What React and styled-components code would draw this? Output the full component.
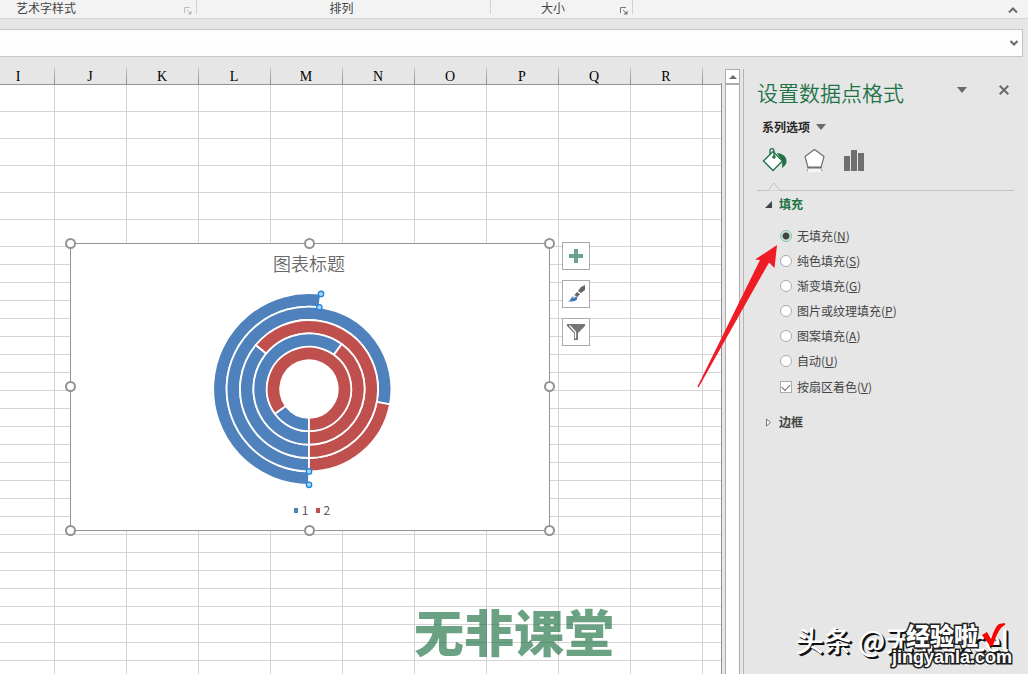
import React, { Component } from 'react';
import styled, { createGlobalStyle } from 'styled-components'


const COLUMNS = ['I', 'J', 'K', 'L', 'M', 'N', 'O', 'P', 'Q', 'R', 'S']
const TALL_ROWS = 6
const ROWS = 60

const BLUE = '#4f81bd'
const RED = '#c0504d'

const FILL_OPTIONS = [
  { id: 'none', name: '无填充', hotkey: 'N' },
  { id: 'solid', name: '纯色填充', hotkey: 'S' },
  { id: 'gradient', name: '渐变填充', hotkey: 'G' },
  { id: 'picture', name: '图片或纹理填充', hotkey: 'P' },
  { id: 'pattern', name: '图案填充', hotkey: 'A' },
  { id: 'auto', name: '自动', hotkey: 'U' },
]

// from the outer ring to the inner one, first is the share of series 1
const RINGS = [
  { first: 0.52, restHidden: true },
  { first: 0.78 },
  { first: 0.36 },
  { first: 0.6 },
  { first: 0.15 },
]
const CENTER = 100
const OUTER = 95.8
const STEP = 13.4

function point(radius, share) {
  // the first slice starts at six o'clock
  const angle = Math.PI + share * 2 * Math.PI
  return [CENTER + radius * Math.sin(angle), CENTER - radius * Math.cos(angle)]
}

function slice(outer, inner, from, to) {
  const large = to - from > 0.5 ? 1 : 0
  const a = point(outer, from)
  const b = point(outer, to)
  const c = point(inner, to)
  const d = point(inner, from)
  return `M${a} A${outer} ${outer} 0 ${large} 1 ${b} L${c} A${inner} ${inner} 0 ${large} 0 ${d} Z`
}

const Doughnut = () => (
  <DoughnutSvg viewBox="0 0 200 200" role="img" aria-label="图表标题">
    {RINGS.map((ring, i) => {
      const outer = OUTER - i * STEP
      const inner = outer - STEP
      return (
        <g key={i} stroke="#fff" strokeWidth="1.8">
          <path d={slice(outer, inner, 0, ring.first)} fill={BLUE} />
          {!ring.restHidden && <path d={slice(outer, inner, ring.first, 1)} fill={RED} />}
        </g>
      )
    })}
    {[[OUTER, 0], [OUTER - STEP, 0], [OUTER, 0.52], [OUTER - STEP, 0.52]].map(([r, s]) => {
      const [x, y] = point(r, s)
      return <circle key={`${r}-${s}`} cx={x} cy={y} r="2.7" fill="#a9d1f5" stroke="#1c86dc" strokeWidth="1.3" />
    })}
  </DoughnutSvg>
)

const Launcher = ({ color }) => (
  <svg width="8" height="8" viewBox="0 0 8 8" fill="none" stroke={color}>
    <path d="M0.5 6V0.5H6M3 3l3 3" />
    <path d="M7.5 3.5v4h-4z" fill={color} stroke="none" />
  </svg>
)

const Triangle = () => (
  <svg width="10" height="6" viewBox="0 0 10 6"><path d="M0 0h10L5 6z" fill="#6a6a6a" /></svg>
)

const BucketIcon = () => (
  <svg width="26" height="24" viewBox="0 0 26 24" fill="none">
    <path d="M15 5c6 .5 10 4 9.500 9-.2 2-1.500 4-4.500 6 .3-3 .5-5-.5-8z" fill="#217346" />
    <path d="M11 3.500l9.500 9.500-9.500 9.500L1.500 13z" fill="#fff" stroke="#217346" strokeWidth="1.400" />
    <path d="M8 6.500V2.500c0-2.500 4-2.500 4 0v6" stroke="#217346" strokeWidth="1.300" />
    <circle cx="12" cy="9" r="1.800" fill="#217346" />
  </svg>
)

const PentagonIcon = () => (
  <svg width="24" height="24" viewBox="0 0 24 24" fill="none">
    <path d="M4 20h15v4H4z" fill="#f6f6f6" />
    <path d="M11.500 1.500l9.500 7L18 19.500H5L2 8.500z" fill="#fff" stroke="#6f6f6f" strokeWidth="1.200" />
    <path d="M4.500 19.500h14" stroke="#6f6f6f" strokeWidth="2" />
    <path d="M5 20.500l-1 3M18 20.500l1 3" stroke="#999" />
  </svg>
)

const BarsIcon = () => (
  <svg width="24" height="24" viewBox="0 0 24 24" fill="#6f6f6f">
    <path d="M2 8h6v15H2zM9 2h6v21H9zM16 5h6v18h-6z" />
  </svg>
)

const PlusIcon = () => (
  <svg width="20" height="20" viewBox="0 0 20 20"><path d="M8 3h4v5h5v4h-5v5H8v-5H3V8h5z" fill="#68a490" /></svg>
)

const BrushIcon = () => (
  <svg width="20" height="20" viewBox="0 0 20 20">
    <path d="M19 1v5l-4 3-3-2 3-4z" fill="#666" />
    <path d="M11 8l3 2-2.500 3-3-2z" fill="#666" />
    <path d="M1 17.500c2 0 3-1 4-3 1-2.500 4-3.500 5.500-2s.5 4-2 4.500c-2.500.7-5 .6-7.500.5z" fill="#3e75b5" />
    <path d="M7 14c.5-1.500 2-1.800 2.800-1" stroke="#fff" strokeWidth="1.200" fill="none" />
  </svg>
)

const FunnelIcon = () => (
  <svg width="20" height="20" viewBox="0 0 20 20">
    <path d="M1 2h18v2l-7 7v7H8v-7L1 4z" fill="#757575" />
    <path d="M3.500 3.500l6 6.500v6.500" stroke="#fff" strokeWidth="1.300" fill="none" />
  </svg>
)

class Ribbon extends Component {
  render() {
    return (
      <RibbonStyle>
        <Group width={197}>
          <GroupName indent={16}>艺术字样式</GroupName>
          <LauncherButton type="button" aria-label="艺术字样式"><Launcher color="#bdbdbd" /></LauncherButton>
        </Group>
        <Group width={294}>
          <GroupName centered>排列</GroupName>
        </Group>
        <Group width={142}>
          <GroupName indent={50}>大小</GroupName>
          <LauncherButton type="button" aria-label="大小"><Launcher color="#777" /></LauncherButton>
        </Group>
        <Collapse type="button" aria-label="折叠功能区">
          <svg width="10" height="6" viewBox="0 0 10 6" fill="none" stroke="#6a6a6a" strokeWidth="2"><path d="M1 5.500l4-4 4 4" /></svg>
        </Collapse>
      </RibbonStyle>
    )
  }
}

class FormulaBar extends Component {
  render() {
    return (
      <FormulaStyle>
        <FormulaInput aria-label="编辑栏" />
        <IconButton type="button" aria-label="展开编辑栏">
          <svg width="8" height="6" viewBox="0 0 8 6" fill="none" stroke="#6a6a6a" strokeWidth="2"><path d="M.5 1L4 4.500 7.500 1" /></svg>
        </IconButton>
      </FormulaStyle>
    )
  }
}

class Chart extends Component {
  render() {
    return (
      <ChartStyle>
        <ChartTitle>图表标题</ChartTitle>
        <Doughnut />
        <Legend>
          <LegendItem color={BLUE}>1</LegendItem>
          <LegendItem color={RED}>2</LegendItem>
        </Legend>
        {[0, 50, 100].map(y => [0, 50, 100].map(x => (
          (x !== 50 || y !== 50) && <Handle key={`${x}-${y}`} x={x} y={y} />
        )))}
        <ChartTools>
          <ToolButton type="button" aria-label="图表元素"><PlusIcon /></ToolButton>
          <ToolButton type="button" aria-label="图表样式"><BrushIcon /></ToolButton>
          <ToolButton type="button" aria-label="图表筛选器"><FunnelIcon /></ToolButton>
        </ChartTools>
      </ChartStyle>
    )
  }
}

class Sheet extends Component {
  render() {
    const rows = Array.from({ length: ROWS }, (_, i) => i)
    return (
      <SheetStyle>
        <Grid>
          <thead>
            <tr>{COLUMNS.map(name => <HeadCell key={name}>{name}</HeadCell>)}</tr>
          </thead>
          <tbody>
            {rows.map(i => (
              <tr key={i}>
                {COLUMNS.map(name => <Cell key={name} tall={i < TALL_ROWS ? 1 : 0} />)}
              </tr>
            ))}
          </tbody>
        </Grid>
        <Chart />
        <Brand>无非课堂</Brand>
      </SheetStyle>
    )
  }
}

class FormatPane extends Component {
  constructor(props) {
    super(props);
    this.state = { fill: 'none', vary: true }
  }

  changeFill = (e) => {
    this.setState({ fill: e.target.value })
  }

  changeVary = (e) => {
    this.setState({ vary: e.target.checked })
  }

  render() {
    const { fill, vary } = this.state
    return (
      <PaneStyle>
        <PaneHead>
          <PaneTitle>设置数据点格式</PaneTitle>
          <IconButton type="button" aria-label="任务窗格选项"><Triangle /></IconButton>
          <IconButton type="button" aria-label="关闭">
            <svg width="10" height="10" viewBox="0 0 10 10" stroke="#6a6a6a" strokeWidth="2"><path d="M.7.7l8.600 8.600M9.300.7L.7 9.300" /></svg>
          </IconButton>
        </PaneHead>
        <SeriesButton type="button">系列选项<Triangle /></SeriesButton>
        <PaneTabs>
          <IconButton type="button" aria-label="填充与线条"><BucketIcon /></IconButton>
          <IconButton type="button" aria-label="效果"><PentagonIcon /></IconButton>
          <IconButton type="button" aria-label="系列选项"><BarsIcon /></IconButton>
        </PaneTabs>
        <Divider>
          <svg width="14" height="9" viewBox="0 0 14 9"><path d="M0 8.500h1L7 1l6 7.500h1" fill="#e6e6e6" stroke="#c3c3c3" /></svg>
        </Divider>
        <SectionButton type="button" active>
          <svg width="7" height="7" viewBox="0 0 7 7"><path d="M7 0v7H0z" fill="#444" /></svg>
          填充
        </SectionButton>
        <Options>
          {FILL_OPTIONS.map(item => (
            <Option key={item.id}>
              <Radio name="fill" value={item.id} checked={fill === item.id} onChange={this.changeFill} />
              <span>{item.name}(<u>{item.hotkey}</u>)</span>
            </Option>
          ))}
          <Option spaced>
            <Check checked={vary} onChange={this.changeVary} />
            <span>按扇区着色(<u>V</u>)</span>
          </Option>
        </Options>
        <SectionButton type="button">
          <svg width="7" height="9" viewBox="0 0 7 9"><path d="M1.500 1v7l4-3.500z" fill="#fff" stroke="#777" /></svg>
          边框
        </SectionButton>
      </PaneStyle>
    )
  }
}

class App extends Component {
  render() {
    return (
      <AppStyle>
        <GlobalStyle />
        <Ribbon />
        <FormulaBar />
        <Main>
          <Sheet />
          <ScrollBar>
            <ScrollUp type="button" aria-label="向上滚动">
              <svg width="8" height="4" viewBox="0 0 8 4"><path d="M4 0l4 4H0z" fill="#6a6a6a" /></svg>
            </ScrollUp>
            <Track />
          </ScrollBar>
          <FormatPane />
        </Main>
        <Pointer viewBox="0 0 82 144">
          <path d="M80 0L58 14.500l5 .5L.5 141.500l1 1L72 17.500l5.500 5.500z" fill="#ee1c25" />
        </Pointer>
        <Author>头条 @无非Excel</Author>
        <Stamp>
          <StampName>
            经验啦
            <svg width="26" height="26" viewBox="0 0 26 26"><path d="M2 13l5-3 4 7C14 9 16 4 19 2l6-1v2c-5 2-9 10-12 21h-3z" fill="#f00" /></svg>
          </StampName>
          <StampSite>jingyanla.com</StampSite>
        </Stamp>
      </AppStyle>
    );
  }
}

const GlobalStyle = createGlobalStyle`
*{
  box-sizing: border-box;
}
body{
  margin: 0;
  font-family: "Noto Sans CJK SC", sans-serif;
  font-size: 12px;
  color: #444;
}
button{
  border: 0;
  padding: 0;
  background: none;
  font: inherit;
  color: inherit;
}
svg{
  display: block;
}
`

const AppStyle = styled.div`
  position: relative;
  display: flex;
  flex-direction: column;
  height: 100vh;
  overflow: hidden;
  background: #e6e6e6;
`

const RibbonStyle = styled.header`
  display: flex;
  height: 19px;
  background: #f3f3f3;
  border-bottom: 1px solid #d2d2d2;
`

const Group = styled.div`
  display: flex;
  align-items: flex-start;
  justify-content: space-between;
  width: ${p => p.width}px;
  height: 18px;
  padding-right: 5px;
  background: linear-gradient(#d2d2d2, #d2d2d2) right top / 1px 14px no-repeat;
`

const GroupName = styled.span`
  line-height: 16px;
  padding-left: ${p => p.indent || 0}px;
  margin: ${p => (p.centered ? '0 auto' : '0')};
`

const IconButton = styled.button`
  display: flex;
  align-items: center;
  justify-content: center;
`

const LauncherButton = styled(IconButton)`
  margin-top: 7px;
`

const Collapse = styled(IconButton)`
  margin-left: auto;
  padding: 2px 10px 0;
`

const FormulaStyle = styled.div`
  display: flex;
  height: 28px;
  margin: 10px 5px 0 0;
  padding-right: 4px;
  background: #fdfdfd;
  border: 1px solid #c6c6c6;
  border-left: 0;
`

const FormulaInput = styled.input`
  flex: 1;
  border: 0;
  outline: 0;
  background: transparent;
`

const Main = styled.main`
  display: flex;
  flex: 1;
  min-height: 0;
`

const SheetStyle = styled.section`
  position: relative;
  flex: 1;
  min-width: 0;
  overflow: hidden;
  border-right: 1px solid #939393;
  border-image: linear-gradient(#e6e6e6 27px, #939393 27px) 1;
`

const Grid = styled.table`
  width: 792px;
  margin-left: -17px;
  table-layout: fixed;
  border-collapse: separate;
  border-spacing: 0;
`

const HeadCell = styled.th`
  height: 28px;
  padding: 12px 2px 0 0;
  border-bottom: 1px solid #939393;
  background: linear-gradient(#d0d0d0, #8a8a8a) right bottom / 1px 17px no-repeat;
  font: 14px/14px "Liberation Serif", serif;
  color: #000;
`

const Cell = styled.td`
  height: ${p => (p.tall ? 27 : 18)}px;
  padding: 0;
  border-right: 1px solid #d4d4d4;
  border-bottom: 1px solid #d4d4d4;
  background: #fff;
`

const ChartStyle = styled.div`
  position: absolute;
  top: 186px;
  left: 70px;
  display: flex;
  flex-direction: column;
  align-items: center;
  width: 480px;
  height: 288px;
  padding-right: 2px;
  background: #fff;
  border: 1px solid #939393;
`

const ChartTitle = styled.h2`
  margin: 7px 0 0;
  font-size: 18px;
  font-weight: 350;
  line-height: 24px;
  color: #6a6a6a;
`

const DoughnutSvg = styled.svg`
  width: 200px;
  height: 200px;
  margin-top: 14px;
`

const Legend = styled.div`
  display: flex;
  gap: 7px;
  margin-top: 12px;
  margin-left: 6px;
`

const LegendItem = styled.span`
  display: flex;
  align-items: center;
  gap: 4px;
  font-size: 12px;
  line-height: 18px;
  color: #595959;
  &::before{
    content: '';
    width: 4px;
    height: 5px;
    background: ${p => p.color};
  }
`

const Handle = styled.i`
  position: absolute;
  top: ${p => p.y}%;
  left: ${p => p.x}%;
  width: 11px;
  height: 11px;
  margin-top: ${p => (p.y === 100 ? -5 : -6)}px;
  margin-left: ${p => (p.x === 100 ? -5 : -6)}px;
  border: 2px solid #939393;
  border-radius: 50%;
  background: #fff;
`

const ChartTools = styled.div`
  position: absolute;
  top: -2px;
  left: 491px;
  display: flex;
  flex-direction: column;
  gap: 10px;
`

const ToolButton = styled(IconButton)`
  width: 28px;
  height: 28px;
  background: #fff;
  border: 1px solid #ababab;
`

const Brand = styled.div`
  position: absolute;
  top: 543px;
  left: 414px;
  font-size: 50px;
  font-weight: 900;
  line-height: 60px;
  color: #217346;
  opacity: .66;
`

const ScrollBar = styled.div`
  display: flex;
  flex-direction: column;
  width: 15px;
  margin: 12px 3px 0;
`

const ScrollUp = styled(IconButton)`
  height: 15px;
  background: #fff;
  border: 1px solid #ababab;
`

const Track = styled.div`
  flex: 1;
  background: #fff;
  border: 1px solid #ababab;
  border-bottom: 0;
`

const PaneStyle = styled.aside`
  display: flex;
  flex-direction: column;
  width: 285px;
  margin-top: 12px;
  padding: 12px 14px 0 13px;
  border-left: 1px solid #b5b5b5;
`

const PaneHead = styled.div`
  display: flex;
  align-items: flex-start;
  gap: 32px;
  padding-right: 5px;
  & > button{
    height: 18px;
  }
`

const PaneTitle = styled.h1`
  flex: 1;
  margin: 0;
  font-size: 21px;
  font-weight: 350;
  line-height: 22px;
  color: #217346;
`

const SeriesButton = styled.button`
  display: flex;
  align-items: center;
  align-self: flex-start;
  gap: 6px;
  margin: 15px 0 0 5px;
  font-weight: 700;
  line-height: 18px;
  color: #262626;
`

const PaneTabs = styled.nav`
  display: flex;
  gap: 15px;
  margin: 12px 0 0 5px;
`

const Divider = styled.div`
  height: 9px;
  margin-top: 10px;
  padding-left: 10px;
  background: linear-gradient(#c3c3c3, #c3c3c3) bottom / 100% 1px no-repeat;
`

const SectionButton = styled.button`
  display: flex;
  align-items: center;
  align-self: flex-start;
  gap: 7px;
  margin: 4px 0 0 8px;
  font-weight: 700;
  line-height: 18px;
  color: ${p => (p.active ? '#217346' : '#444')};
`

const Options = styled.div`
  display: flex;
  flex-direction: column;
  padding: 10px 0 10px 23px;
`

const Option = styled.label`
  display: flex;
  align-items: center;
  gap: 5px;
  height: 25px;
  margin-top: ${p => (p.spaced ? 1 : 0)}px;
`

const Radio = styled.input.attrs({ type: 'radio' })`
  appearance: none;
  width: 12px;
  height: 12px;
  margin: 0;
  border: 1px solid #ababab;
  border-radius: 50%;
  background: #fff;
  &:checked{
    border-color: #86bfa0;
    background: radial-gradient(circle, #444 3px, #d3f0e0 4px);
  }
`

const Check = styled.input.attrs({ type: 'checkbox' })`
  appearance: none;
  display: flex;
  width: 12px;
  height: 12px;
  margin: 0;
  border: 1px solid #ababab;
  background: #fff;
  &:checked::before{
    content: '';
    width: 8px;
    height: 4px;
    margin: 2px 1px;
    border: solid #666;
    border-width: 0 0 1px 1px;
    transform: rotate(-45deg);
  }
`

const Pointer = styled.svg`
  position: absolute;
  top: 245px;
  right: 249px;
  width: 82px;
  height: 144px;
  pointer-events: none;
`

const Author = styled.div`
  position: absolute;
  right: 19px;
  bottom: 16px;
  font-size: 28px;
  font-weight: 500;
  line-height: 36px;
  color: #fff;
  text-shadow: 1px 1px 0 #111, 2px 2px 0 #111;
`

const Stamp = styled.div`
  position: absolute;
  right: 16px;
  bottom: 8px;
  display: flex;
  flex-direction: column;
  align-items: flex-end;
  color: #fff;
  paint-order: stroke fill;
  -webkit-text-stroke: 3px #222;
`

const StampName = styled.div`
  display: flex;
  gap: 2px;
  padding-right: 6px;
  font-size: 24px;
  font-weight: 900;
  line-height: 26px;
`

const StampSite = styled.div`
  font: 700 18px/18px "Liberation Sans", sans-serif;
`

export default App;
